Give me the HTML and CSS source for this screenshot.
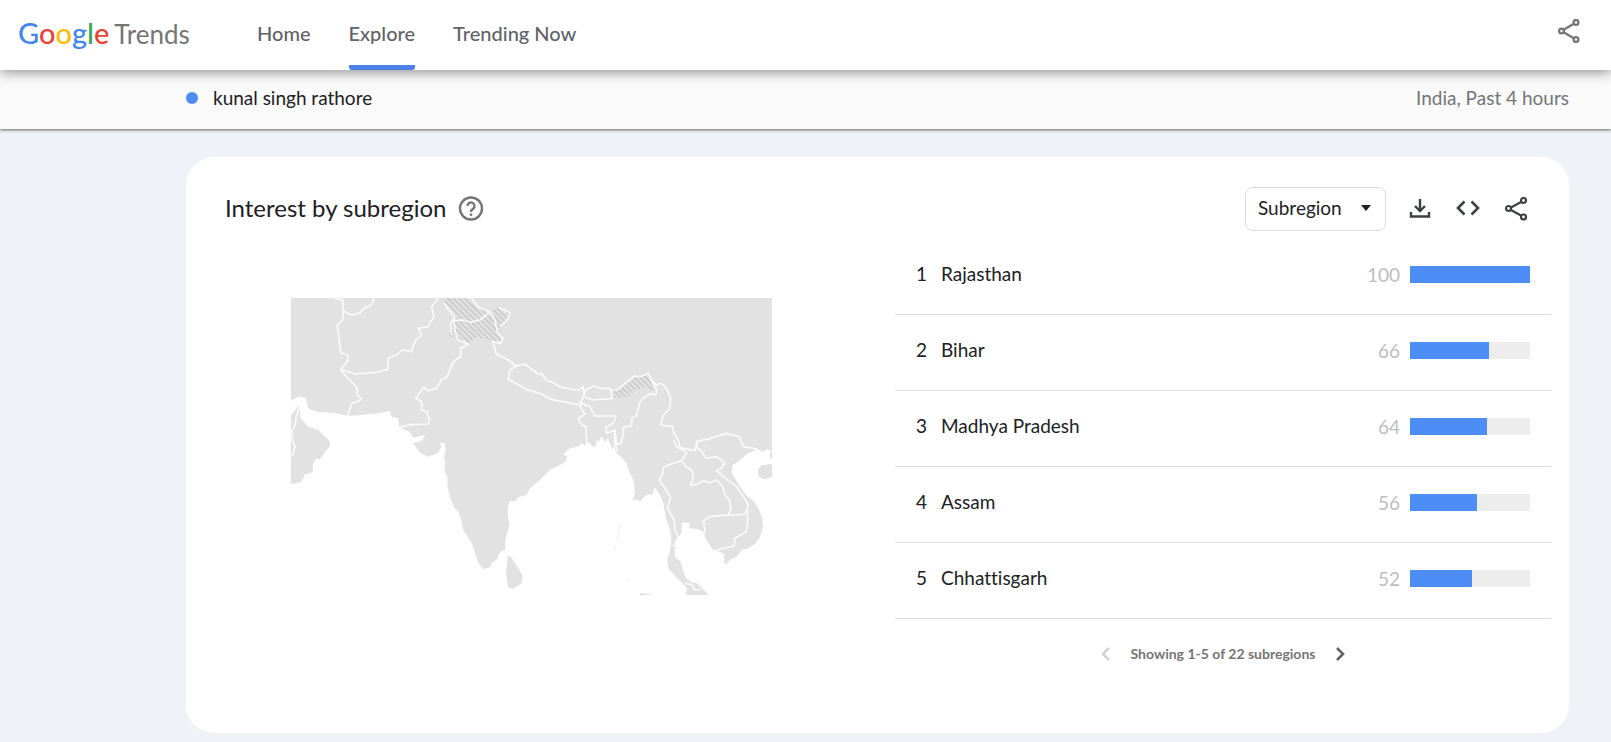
FILE: index.html
```html
<!DOCTYPE html>
<html lang="en">
<head>
    <meta charset="UTF-8">
    <meta name="viewport" content="width=device-width, initial-scale=1.0">
    <title>kunal singh rathore - Explore - Google Trends</title>
    <link rel="stylesheet" href="styles.css">
</head>
<body>
    <header class="header">
        <a class="logo" href="#"><span class="google"><span class="blue">G</span><span class="red">o</span><span class="yellow">o</span><span class="blue">g</span><span class="green">l</span><span class="red">e</span></span> <span class="trends">Trends</span></a>
        <nav class="nav">
            <a href="#">Home</a>
            <a href="#" class="active">Explore</a>
            <a href="#">Trending Now</a>
        </nav>
        <button type="button" class="icon-button" aria-label="Share">
            <svg width="24" height="24" viewBox="0 0 24 24" fill="none" stroke="currentColor" stroke-width="2.3"><circle cx="19" cy="3.5" r="2.4"/><circle cx="4.5" cy="12" r="2.4"/><circle cx="19" cy="20.5" r="2.4"/><path d="M7 10.5l9.500-5.500M7 13.500l9.500 5.500"/></svg>
        </button>
    </header>

    <div class="term-bar">
        <span class="dot"></span>
        <span class="term">kunal singh rathore</span>
        <span class="filters">India, Past 4 hours</span>
    </div>

    <main class="card">
        <div class="card-header">
            <h1>Interest by subregion</h1>
            <button type="button" class="icon-button help" aria-label="Help">
                <svg width="26" height="26" viewBox="0 0 26 26" fill="none" stroke="currentColor" stroke-width="2.4"><circle cx="13" cy="12.500" r="11"/><path d="M9.500 10a3.500 3.500 0 1 1 5.800 2.600c-1.300 1.100-2.300 1.600-2.300 3.400"/><path d="M13 17.500v2.400"/></svg>
            </button>
            <div class="tools">
                <div class="select-box">
                    <select aria-label="Resolution">
                        <option>Subregion</option>
                        <option>City</option>
                    </select>
                    <svg class="arrow" width="10" height="6" viewBox="0 0 10 6"><path d="M0 0h10L5 6z" fill="currentColor"/></svg>
                </div>
                <button type="button" class="icon-button" aria-label="Download">
                    <svg width="24" height="24" viewBox="0 0 24 24" fill="none" stroke="currentColor" stroke-width="2.4"><path d="M12 2v12M7 9l5 5 5-5M3 15v4.500h18V15"/></svg>
                </button>
                <button type="button" class="icon-button" aria-label="Embed">
                    <svg width="24" height="24" viewBox="0 0 24 24" fill="none" stroke="currentColor" stroke-width="2.6"><path d="M8.500 4.500L2 11 8.500 17.500M15.500 4.500L22 11l-6.500 6.500"/></svg>
                </button>
                <button type="button" class="icon-button" aria-label="Share chart">
                    <svg width="24" height="24" viewBox="0 0 24 24" fill="none" stroke="currentColor" stroke-width="2.2"><circle cx="19.500" cy="3.500" r="2.500"/><circle cx="4.500" cy="11.500" r="2.500"/><circle cx="19.500" cy="20" r="2.500"/><path d="M7 10.500L17 5M7 13l10 5.500"/></svg>
                </button>
            </div>
        </div>

        <div class="card-body">
            <div class="map">
                <svg viewBox="33 24 1443 891" role="img" aria-label="Map of India">
                    <defs>
                        <pattern id="hatch" width="12" height="12" patternUnits="userSpaceOnUse" patternTransform="rotate(-45)">
                            <rect width="12" height="12" fill="#e2e2e2"/>
                            <rect width="4" height="12" fill="#c4c4c4"/>
                        </pattern>
                    </defs>
                    <!-- land -->
                    <g fill="#e2e2e2">
                        <path d="M33 24H1476V510L1469 495 1474 482 1460 478 1450 485 1432 477 1400 493 1378 512 1358 525 1355 545 1362 560 1380 590 1400 617 1420 632 1435 655 1446 682 1449 710 1441 740 1425 762 1405 775 1385 780 1370 800 1350 810 1335 826 1332 805 1333 793 1312 782 1297 778 1288 763 1276 745 1270 725 1255 718 1228 715 1229 698 1205 698 1205 728 1192 745 1185 765 1185 800 1202 815 1208 840 1218 863 1235 878 1248 878 1260 888 1288 917H1216L1222 895 1205 878 1185 858 1165 835 1162 808 1170 780 1174 755 1172 730 1157 680 1150 640 1138 612 1125 592 1119 605 1120 612 1100 615 1092 622 1080 635 1070 628 1058 632 1065 605 1060 570 1047 545 1040 520 1022 500 1008 488 1002 465 998 480 990 462 984 445 975 455 965 440 955 455 945 448 950 465 940 472 930 460 920 455 922 470 905 460 895 470 870 475 850 492 862 500 856 515 830 530 810 540 785 565 750 595 740 615 715 622 707 633 690 634 683 650 684 680 688 705 682 730 677 745 675 780 665 782 655 795 652 808 635 818 630 832 612 838 603 830 594 815 575 760 550 720 545 695 535 665 522 650 510 622 503 590 502 560 493 540 496 515 492 500 497 480 495 460 480 458 484 472 475 485 472 490 445 500 422 490 398 460 425 452 435 435 400 443 388 425 357 412 355 385 335 380 330 363 300 369 245 375 205 378 160 368 110 365 85 355 77 323 55 320 33 332z"/>
                        <path d="M33 375L58 345 62 385 85 410 115 420 130 435 150 455 148 470 132 490 120 508 108 506 98 525 99 547 75 553 65 575 33 583z"/>
                        <path d="M684 795L695 805 712 830 728 858 725 880 698 897 684 890 678 850z"/>
                        <path d="M1434 540L1445 525 1476 522V560L1455 568 1436 560z"/>
                        <path d="M1080 908L1130 917H1080z"/>
                    </g>
                    <!-- disputed areas -->
                    <g fill="url(#hatch)">
                        <path d="M485 42L502 24H562L580 42 605 60 630 65 655 52 690 68 682 92 665 108 655 118 668 145 662 162 635 152 590 140 565 162 545 155 522 142 508 138 512 100 525 90 505 58z"/>
                        <path d="M1000 325V302L1022 290 1050 268 1070 255 1100 252 1115 268 1130 285 1120 300 1095 292 1065 302 1040 322z"/>
                    </g>
                    <!-- borders -->
                    <g fill="none" stroke="#fafafa" stroke-width="5" stroke-linejoin="round">
                        <path d="M165 26L188 30 190 62 188 90 172 105 178 150 182 188 203 195 205 210 183 238 225 252 290 247 323 238 325 205 350 195 360 185 372 180 395 185 400 165 408 150 425 135 415 115 445 110 450 95 462 85 455 50 475 24"/>
                        <path d="M190 62L215 75 240 68 252 55 275 45 282 24M183 238L200 262 230 290 232 315 243 325 240 332 215 340 203 378"/>
                        <path d="M357 412L395 404 445 402 448 388 440 365 425 360 425 335 407 325 432 292 442 302 470 295 485 268 500 262 520 215 542 200 542 175 565 162 535 150 525 125 522 92 550 90 570 97 600 90 630 65 595 52 575 24"/>
                        <path d="M630 65L645 90 652 125 668 145 662 160 638 155 648 190 665 200 685 210 708 228 735 222 755 238 775 252 785 250 798 270 820 278 840 290 870 297 895 300 910 290 912 320 895 345 865 338 830 332 805 325 785 312 740 298 685 268 690 240 708 228"/>
                        <path d="M490 38L505 58 525 82 512 98 515 135M655 52L690 68 682 90 660 110"/>
                        <path d="M910 320L918 300 940 288 960 295 990 295 998 325 940 330 915 322M990 302L1010 300 1030 285 1065 258 1080 260 1105 250 1115 272 1130 285 1145 280 1160 295 1172 325 1170 355 1150 375 1142 405 1178 410 1182 430 1195 450 1200 472 1225 478 1245 482 1250 455 1290 445 1340 430 1378 440 1390 470 1432 477"/>
                        <path d="M1115 272L1130 300 1128 315 1110 310 1090 325 1078 340 1070 375 1055 385 1055 408 1030 412 1030 435 1022 460 1010 465 1005 420 980 430 978 412 1000 400 1008 378 945 378 930 350 905 340 900 350 915 372 895 385 905 405 918 410 920 470M1003 430L1005 460 1013 485"/>
                        <path d="M1182 450L1190 470 1212 482 1220 490 1205 512 1180 520 1150 532 1148 552 1138 570 1165 610 1172 625 1162 655 1182 690 1185 720 1195 740 1180 770"/>
                        <path d="M1205 512L1218 530 1235 540 1240 560 1232 585 1250 583 1270 572 1290 578 1310 570 1328 590 1335 615 1348 630 1353 655 1345 675 1290 680 1270 692 1275 720 1270 735"/>
                        <path d="M1250 455L1252 475 1262 480 1278 505 1310 500 1335 520 1322 535 1310 542 1330 560 1370 590 1400 635 1405 650 1395 672 1370 675 1345 675M1402 655L1403 700 1398 725 1365 745 1362 768 1310 780"/>
                        <path d="M1216 880L1235 883 1245 900 1262 898M60 345L48 385 45 405 35 425 38 455 45 470 36 500"/>
                    </g>
                    <!-- small islands -->
                    <path d="M1020 702L1012 750M1008 765L1005 778M1045 868V875" stroke="#eee" stroke-width="3"/>
                </svg>
            </div>

            <div class="regions">
                <ol>
                    <li><span class="rank">1</span><span class="name">Rajasthan</span><span class="value">100</span><span class="bar"><span style="width: 100%"></span></span></li>
                    <li><span class="rank">2</span><span class="name">Bihar</span><span class="value">66</span><span class="bar"><span style="width: 66%"></span></span></li>
                    <li><span class="rank">3</span><span class="name">Madhya Pradesh</span><span class="value">64</span><span class="bar"><span style="width: 64%"></span></span></li>
                    <li><span class="rank">4</span><span class="name">Assam</span><span class="value">56</span><span class="bar"><span style="width: 56%"></span></span></li>
                    <li><span class="rank">5</span><span class="name">Chhattisgarh</span><span class="value">52</span><span class="bar"><span style="width: 52%"></span></span></li>
                </ol>
                <div class="pager">
                    <button type="button" class="icon-button" aria-label="Previous" disabled>
                        <svg width="10" height="14" viewBox="0 0 10 14" fill="none" stroke="currentColor" stroke-width="2.2"><path d="M8 1L2 7l6 6"/></svg>
                    </button>
                    <span>Showing 1-5 of 22 subregions</span>
                    <button type="button" class="icon-button" aria-label="Next">
                        <svg width="10" height="14" viewBox="0 0 10 14" fill="none" stroke="currentColor" stroke-width="2.5"><path d="M2 1l6 6-6 6"/></svg>
                    </button>
                </div>
            </div>
        </div>
    </main>
</body>
</html>
```
FILE: styles.css
```css
* {
    box-sizing: border-box;
}
body {
    margin: 0;
    background-color: #eff3f8;
    color: #202124;
    font-family: Lato, sans-serif;
    font-size: 19px;
    line-height: 24px;
    font-variant-ligatures: none;
}
a {
    color: inherit;
    text-decoration: none;
}
.icon-button {
    display: flex;
    padding: 0;
    border: 0;
    background: none;
    color: #3c4043;
    cursor: pointer;
}

/* Top bar */
.header {
    position: relative;
    display: flex;
    align-items: center;
    height: 70px;
    padding: 0 30px 0 18px;
    background-color: #fff;
    box-shadow: 0 2px 12px rgba(0, 0, 0, 0.45);
}
.header .icon-button {
    margin: 0 0 8px auto;
    color: #757575;
}
.logo {
    display: flex;
    align-items: baseline;
    gap: 5px;
    width: 239px;
    padding-bottom: 4px;
    color: #757575;
}
.google {
    font-size: 29px;
    font-weight: 500;
}
.trends {
    font-size: 26px;
}
.blue { color: #4285f4; }
.red { color: #ea4335; }
.yellow { color: #fbbc05; }
.green { color: #34a853; }
.nav {
    display: flex;
    align-self: stretch;
    gap: 38px;
    color: #5f6368;
    font-size: 20px;
    font-weight: 500;
}
.nav a {
    display: flex;
    align-items: center;
    padding-bottom: 4px;
}
.nav .active {
    background: linear-gradient(#4a80e8, #4a80e8) bottom / 100% 5px no-repeat;
    border-radius: 3px;
}

/* Search term bar */
.term-bar {
    display: flex;
    align-items: center;
    height: 59px;
    padding: 0 42px 4px 186px;
    background-color: #fafafa;
    box-shadow: 0 1px 3px rgba(0, 0, 0, 0.6);
}
.dot {
    width: 12px;
    height: 12px;
    margin-right: 15px;
    border-radius: 50%;
    background-color: #4c8df6;
}
.filters {
    margin-left: auto;
    color: #757575;
}

/* Card */
.card {
    min-height: 576px;
    margin: 28px 42px 9px 186px;
    border-radius: 28px;
    background-color: #fff;
}
.card-header {
    display: flex;
    align-items: center;
    gap: 12px;
    padding: 30px 41px 0 39px;
}
h1 {
    margin: 0;
    padding-bottom: 2px;
    font-size: 24px;
    font-weight: 400;
}
.help {
    color: #757575;
}
.tools {
    display: flex;
    align-items: center;
    gap: 24px;
    margin-left: auto;
}
.select-box {
    position: relative;
    margin-right: -2px;
}
.select-box select {
    width: 141px;
    height: 44px;
    padding: 0 12px 2px;
    border: 1px solid #dadce0;
    border-radius: 8px;
    background-color: #fff;
    color: inherit;
    font: inherit;
    appearance: none;
}
.arrow {
    position: absolute;
    top: 18px;
    right: 15px;
    pointer-events: none;
}
.card-body {
    display: grid;
    grid-template-columns: 1fr 656px;
    padding: 8px 18px 0 0;
}
.map {
    padding: 59px 123px 0 105px;
}
.map svg {
    display: block;
    width: 100%;
}
ol {
    margin: 0;
    padding: 0;
    list-style: none;
}
li {
    display: flex;
    align-items: center;
    height: 76px;
    padding: 0 21px 4px;
    border-bottom: 1px solid #dadce0;
}
.rank {
    width: 25px;
    padding-bottom: 2px;
}
.name {
    padding-bottom: 2px;
}
.value {
    margin: 0 10px 0 auto;
    color: #bdbdbd;
}
.bar {
    width: 120px;
    height: 17px;
    background-color: #ededed;
}
.bar span {
    display: block;
    height: 100%;
    background-color: #4c8df6;
}
.pager {
    display: flex;
    align-items: center;
    justify-content: center;
    gap: 20px;
    padding-top: 23px;
    color: #757575;
    font-size: 14px;
    font-weight: 700;
}
.pager .icon-button {
    color: #616161;
}
.pager .icon-button:disabled {
    color: #ccc;
}
```
